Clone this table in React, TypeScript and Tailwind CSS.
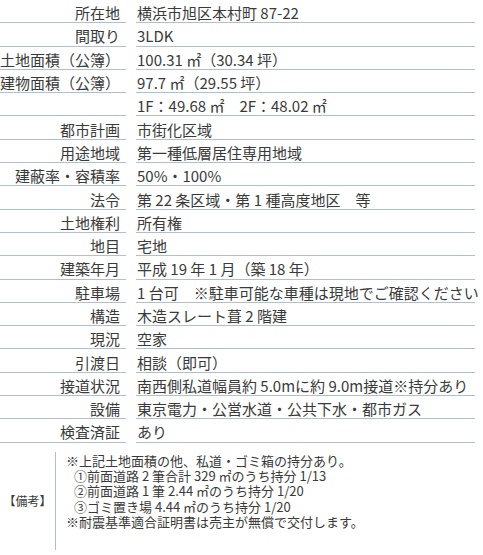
import React from "react";

const rows: [string, string][] = [
  ["所在地", "横浜市旭区本村町 87-22"],
  ["間取り", "3LDK"],
  ["土地面積（公簿）", "100.31 ㎡（30.34 坪）"],
  ["建物面積（公簿）", "97.7 ㎡（29.55 坪）"],
  ["", "1F：49.68 ㎡　2F：48.02 ㎡"],
  ["都市計画", "市街化区域"],
  ["用途地域", "第一種低層居住専用地域"],
  ["建蔽率・容積率", "50%・100%"],
  ["法令", "第 22 条区域・第 1 種高度地区　等"],
  ["土地権利", "所有権"],
  ["地目", "宅地"],
  ["建築年月", "平成 19 年 1 月（築 18 年）"],
  ["駐車場", "1 台可　※駐車可能な車種は現地でご確認ください"],
  ["構造", "木造スレート葺 2 階建"],
  ["現況", "空家"],
  ["引渡日", "相談（即可）"],
  ["接道状況", "南西側私道幅員約 5.0mに約 9.0m接道※持分あり"],
  ["設備", "東京電力・公営水道・公共下水・都市ガス"],
  ["検査済証", "あり"],
];

export default function App() {
  return (
    <div
      className="w-[483px] h-[555px] overflow-hidden bg-white text-[#3a3a3a]"
      style={{ fontFamily: '"Noto Sans CJK JP", "Noto Sans", sans-serif' }}
    >
      <div className="grid grid-cols-[126px_339px] gap-x-[10px]">
        {rows.map(([label, value], i) => (
          <React.Fragment key={i}>
            <div className="h-[23.3px] border-b border-[#aebfcf] flex items-center justify-end pr-[6px] pt-[3px] text-[15px] leading-none whitespace-nowrap">
              {label}
            </div>
            <div className="h-[23.3px] border-b border-[#aebfcf] flex items-center pl-[1px] pt-[3px] text-[15px] leading-none whitespace-nowrap">
              {value}
            </div>
          </React.Fragment>
        ))}
      </div>
      <div className="flex mt-[9px]">
        <div className="w-[55px] flex items-center justify-center text-[12px] leading-none">
          【備考】
        </div>
        <div className="border-l border-[#aebfcf] h-[98px] pl-[10px] pt-[1px] text-[13px] leading-[15.3px] whitespace-nowrap">
          <div>※上記土地面積の他、私道・ゴミ箱の持分あり。</div>
          <div className="pl-[8px]">①前面道路 2 筆合計 329 ㎡のうち持分 1/13</div>
          <div className="pl-[8px]">②前面道路 1 筆 2.44 ㎡のうち持分 1/20</div>
          <div className="pl-[8px]">③ゴミ置き場 4.44 ㎡のうち持分 1/20</div>
          <div>※耐震基準適合証明書は売主が無償で交付します。</div>
        </div>
      </div>
    </div>
  );
}
